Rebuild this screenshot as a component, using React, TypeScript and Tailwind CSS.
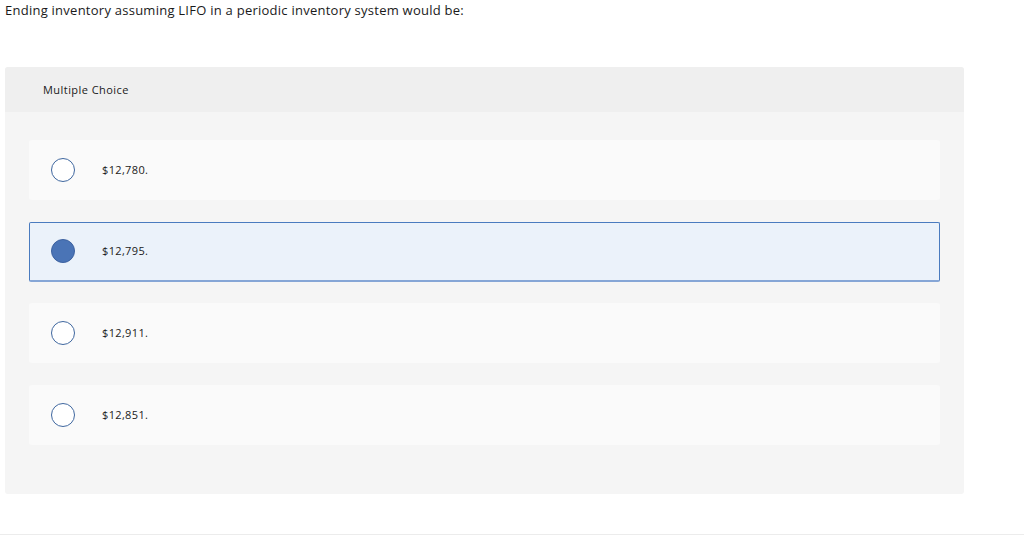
import React from "react";

const options = [
  { label: "$12,780.", selected: false },
  { label: "$12,795.", selected: true },
  { label: "$12,911.", selected: false },
  { label: "$12,851.", selected: false },
];

export default function App() {
  return (
    <div
      className="w-[1024px] h-[535px] bg-white text-[#1a1a1a] overflow-hidden flex flex-col"
      style={{ fontFamily: '"Open Sans", "Liberation Sans", sans-serif' }}
    >
      <div className="pl-[5px] pt-[1px] h-[67px] text-[13px] leading-[18px] tracking-[0.25px]">
        Ending inventory assuming LIFO in a periodic inventory system would be:
      </div>
      <div className="ml-[5px] w-[959px] h-[427px] rounded-[3px] bg-[#f5f5f5] flex flex-col">
        <div className="h-[45px] bg-[#efefef] rounded-t-[3px] pl-[38px] pt-[1px] flex items-center text-[11px] tracking-[0.45px]">
          Multiple Choice
        </div>
        <div className="flex flex-col gap-[21.5px] pt-[28px] pl-[24px]">
          {options.map((o) => (
            <div
              key={o.label}
              className={
                o.selected
                  ? "w-[911px] h-[60px] rounded-[2px] bg-[#ebf2fa] border border-[#4a7bbf] border-b-[2px] border-b-[#86a6d6] flex items-center pl-[21px]"
                  : "w-[911px] h-[60px] rounded-[3px] bg-[#fafafa] flex items-center pl-[22px]"
              }
            >
              {o.selected ? (
                <div className="w-[24px] h-[24px] rounded-full bg-[#4a74b6] border border-[#3d62a0]" />
              ) : (
                <div className="w-[24px] h-[24px] rounded-full bg-white border border-[#3f679f]" />
              )}
              <span className="ml-[27px] pt-[1px] text-[11px] tracking-[0.35px]">{o.label}</span>
            </div>
          ))}
        </div>
      </div>
      <div className="mt-auto h-[1px] bg-[#ececec]" />
    </div>
  );
}
